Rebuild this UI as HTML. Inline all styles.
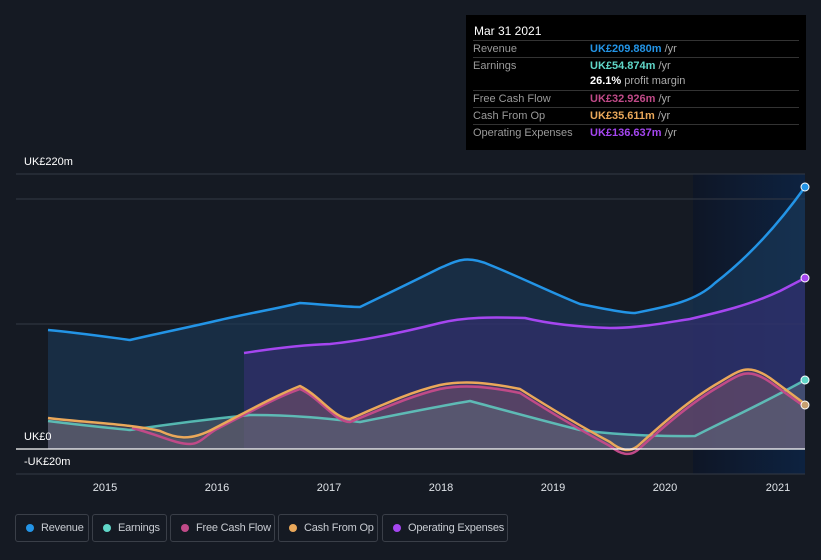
<!DOCTYPE html>
<html><head><meta charset="utf-8"><style>
body{margin:0;width:821px;height:560px;background:#151a23;font-family:"Liberation Sans",sans-serif;overflow:hidden;position:relative}
.tt{position:absolute;left:466px;top:15px;width:340px;height:135px;background:#000;color:#fff;font-size:11px}
.tt .h{position:absolute;left:8px;top:9px;font-size:12px}
.row{position:absolute;left:7px;width:326px;border-top:1px solid #333;height:16px;line-height:16px;color:#9a9a9a;white-space:nowrap}
.row span{position:absolute;left:117px;font-weight:bold}
.row i{font-style:normal;color:#aaa;font-weight:normal}
.lab{position:absolute;color:#fff;font-size:11px}
.leg{position:absolute;top:514px;height:28px;border:1px solid #3a3f48;border-radius:3px;color:#c8ccd2;font-size:11px;letter-spacing:-0.2px;line-height:26px;box-sizing:border-box;white-space:nowrap}
.leg b{position:absolute;left:10px;top:9px;width:8px;height:8px;border-radius:50%}
.leg span{position:absolute;left:25px}
</style></head><body>
<svg width="821" height="560" style="position:absolute;left:0;top:0">
<defs><linearGradient id="hl" x1="0" x2="1"><stop offset="0" stop-color="#0e1626"/><stop offset="1" stop-color="#0d2240"/></linearGradient></defs>
<rect x="693" y="174" width="112" height="300" fill="url(#hl)"/>
<g stroke="#343944" stroke-width="1"><line x1="16" y1="174" x2="805" y2="174"/><line x1="16" y1="199" x2="805" y2="199"/><line x1="16" y1="324" x2="805" y2="324"/><line x1="16" y1="474" x2="805" y2="474"/></g>
<path d="M48,330 C80,333 100,336 130,340 C160,333 190,327 220,320 C250,313 275,309 300,303 C330,305 345,307 360,307 C385,295 410,283 440,268 C455,262 465,254 490,265 C520,277 550,292 580,304 C605,309 625,313 635,313 C665,307 695,302 715,283 C750,256 780,222 805,187 L805,449 L48,449Z" fill="#1a3a5a" fill-opacity=".6"/>
<path d="M244,353 C270,349 300,345 330,344 C360,341 400,333 440,323 C465,317 490,317 525,318 C550,324 580,327 610,328 C640,328 670,322 690,319 C720,312 750,305 780,291 L805,278 L805,449 L244,449Z" fill="#3b2f7a" fill-opacity=".55"/>
<path d="M48,419 C90,424 130,426 160,433 C175,440 190,444 215,430 C250,412 275,398 300,387 C320,398 335,420 350,420 C380,408 410,394 440,387 C465,382 490,385 520,391 C550,410 580,428 610,444 C620,452 630,456 640,446 C660,428 690,401 720,384 C740,372 748,365 770,380 L805,405 L805,449 L48,449Z" fill="#8a5a6a" fill-opacity=".45"/>
<path d="M48,421 C80,425 130,430 130,430 C170,424 210,419 250,415 C300,415 330,419 360,422 C400,414 440,406 470,401 C500,409 540,420 580,430 C630,437 695,436 695,436 C720,423 760,405 805,380 L805,449 L48,449Z" fill="#5a6a7a" fill-opacity=".5"/>
<g fill="none" stroke-width="2.5" stroke-linejoin="round">
<path d="M48,330 C80,333 100,336 130,340 C160,333 190,327 220,320 C250,313 275,309 300,303 C330,305 345,307 360,307 C385,295 410,283 440,268 C455,262 465,254 490,265 C520,277 550,292 580,304 C605,309 625,313 635,313 C665,307 695,302 715,283 C750,256 780,222 805,187" stroke="#2394e6"/>
<path d="M244,353 C270,349 300,345 330,344 C360,341 400,333 440,323 C465,317 490,317 525,318 C550,324 580,327 610,328 C640,328 670,322 690,319 C720,312 750,305 780,291 L805,278" stroke="#a546f0"/>
<path d="M48,421 C80,425 130,430 130,430 C170,424 210,419 250,415 C300,415 330,419 360,422 C400,414 440,406 470,401 C500,409 540,420 580,430 C630,437 695,436 695,436 C720,423 760,405 805,380" stroke="#60d6c8" stroke-opacity=".8"/>
<path d="M132,428 C160,435 175,444 190,444 C200,444 205,436 215,430 C250,412 275,398 300,389 C320,398 335,422 350,422 C380,410 410,396 440,389 C465,384 490,387 520,393 C550,412 580,430 610,446 C620,454 630,458 640,448 C660,430 690,403 720,386 C740,374 748,367 770,382 L805,407" stroke="#c04a88"/>
<path d="M48,418 C90,423 130,424 160,431 C175,438 190,442 215,428 C250,410 275,396 300,386 C320,396 335,419 350,419 C380,406 410,392 440,385 C465,380 490,383 520,389 C550,408 580,426 610,442 C620,450 630,454 640,444 C660,426 690,399 720,382 C740,370 748,363 770,378 L805,404" stroke="#eaa85a"/>
</g>
<line x1="16" y1="449" x2="805" y2="449" stroke="#fff" stroke-width="1.2"/>
<g stroke="#fff" stroke-width="1"><circle cx="805" cy="187" r="4" fill="#2394e6"/><circle cx="805" cy="278" r="4" fill="#a546f0"/><circle cx="805" cy="380" r="4" fill="#60d6c8"/><circle cx="805" cy="405" r="4" fill="#c8a070"/></g>
<g fill="#dfe3e8" font-size="11" text-anchor="middle" font-family="Liberation Sans"><text x="105" y="491">2015</text><text x="217" y="491">2016</text><text x="329" y="491">2017</text><text x="441" y="491">2018</text><text x="553" y="491">2019</text><text x="665" y="491">2020</text><text x="778" y="491">2021</text></g>
</svg>
<div class="lab" style="left:24px;top:156px">UK£220m</div>
<div class="lab" style="left:24px;top:431px">UK£0</div>
<div class="lab" style="left:24px;top:456px">-UK£20m</div>
<div class="tt"><div class="h">Mar 31 2021</div>
<div class="row" style="top:25px">Revenue<span style="color:#2394e6">UK£209.880m <i>/yr</i></span></div>
<div class="row" style="top:42px">Earnings<span style="color:#60d6c8">UK£54.874m <i>/yr</i></span></div>
<div class="row" style="top:58px;border-top:none"><span style="color:#fff">26.1% <i>profit margin</i></span></div>
<div class="row" style="top:75px">Free Cash Flow<span style="color:#c04a88">UK£32.926m <i>/yr</i></span></div>
<div class="row" style="top:92px">Cash From Op<span style="color:#eaa85a">UK£35.611m <i>/yr</i></span></div>
<div class="row" style="top:109px">Operating Expenses<span style="color:#a546f0">UK£136.637m <i>/yr</i></span></div>
</div>
<div class="leg" style="left:15px;width:74px"><b style="background:#2394e6"></b><span>Revenue</span></div>
<div class="leg" style="left:92px;width:75px"><b style="background:#60d6c8"></b><span>Earnings</span></div>
<div class="leg" style="left:170px;width:105px"><b style="background:#c04a88"></b><span>Free Cash Flow</span></div>
<div class="leg" style="left:278px;width:100px"><b style="background:#eaa85a"></b><span>Cash From Op</span></div>
<div class="leg" style="left:382px;width:126px"><b style="background:#a546f0"></b><span>Operating Expenses</span></div>
</body></html>
